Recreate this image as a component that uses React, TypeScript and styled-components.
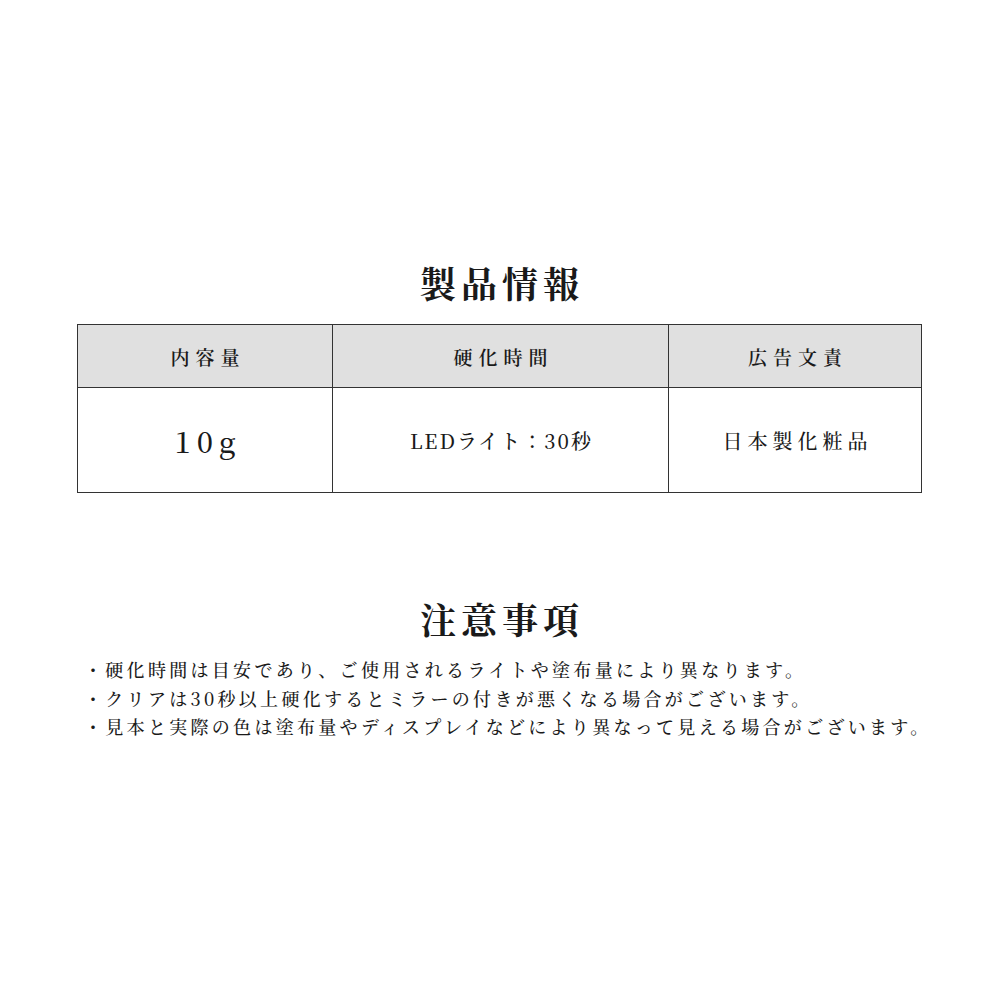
import React from "react";
import styled, { createGlobalStyle } from "styled-components";

const GlobalStyle = createGlobalStyle`
  html, body { margin: 0; padding: 0; background: #fff; }
  body {
    font-family: "Noto Serif CJK JP", "Liberation Serif", "Noto Sans CJK JP", serif;
    color: #1a1a1a;
  }
`;

const Page = styled.div`
  width: 1000px;
  height: 1000px;
  box-sizing: border-box;
  padding: 265px 78px 0 77px;
  display: flex;
  flex-direction: column;
`;

const SectionTitle = styled.h2<{ $mt?: number }>`
  margin: ${(p) => p.$mt ?? 0}px 0 0 0;
  font-size: 36px;
  line-height: 36px;
  font-weight: 700;
  letter-spacing: 5px;
  text-align: center;
  padding-left: 5px;
`;

const Table = styled.div`
  margin-top: 23px;
  display: grid;
  grid-template-columns: 255px 336px 1fr;
  border: 1px solid #333;
`;

const HeadCell = styled.div<{ $last?: boolean }>`
  height: 62px;
  background: #e0e0e0;
  border-right: ${(p) => (p.$last ? "none" : "1px solid #333")};
  border-bottom: 1px solid #333;
  display: flex;
  align-items: center;
  justify-content: center;
  font-size: 19px;
  font-weight: 600;
  letter-spacing: 6px;
  padding-left: 6px;
`;

const BodyCell = styled.div<{ $last?: boolean; $size: number; $ls: number }>`
  height: 104px;
  border-right: ${(p) => (p.$last ? "none" : "1px solid #333")};
  display: flex;
  align-items: center;
  justify-content: center;
  font-size: ${(p) => p.$size}px;
  letter-spacing: ${(p) => p.$ls}px;
  padding-left: ${(p) => p.$ls}px;
  font-weight: 500;
`;

const Notes = styled.ul`
  list-style: none;
  margin: 18px 0 0 0;
  padding: 0 0 0 7px;
  display: flex;
  flex-direction: column;
`;

const Note = styled.li`
  font-size: 18px;
  line-height: 28.5px;
  letter-spacing: 3.3px;
  font-weight: 500;
  white-space: nowrap;
`;

const notes = [
  "・硬化時間は目安であり、ご使用されるライトや塗布量により異なります。",
  "・クリアは30秒以上硬化するとミラーの付きが悪くなる場合がございます。",
  "・見本と実際の色は塗布量やディスプレイなどにより異なって見える場合がございます。",
];

export default function App() {
  return (
    <>
      <GlobalStyle />
      <Page>
        <SectionTitle>製品情報</SectionTitle>
        <Table>
          <HeadCell>内容量</HeadCell>
          <HeadCell>硬化時間</HeadCell>
          <HeadCell $last>広告文責</HeadCell>
          <BodyCell $size={29} $ls={6}>10g</BodyCell>
          <BodyCell $size={20} $ls={2}>LEDライト：30秒</BodyCell>
          <BodyCell $last $size={20} $ls={5}>日本製化粧品</BodyCell>
        </Table>
        <SectionTitle $mt={108}>注意事項</SectionTitle>
        <Notes>
          {notes.map((n) => (
            <Note key={n}>{n}</Note>
          ))}
        </Notes>
      </Page>
    </>
  );
}
